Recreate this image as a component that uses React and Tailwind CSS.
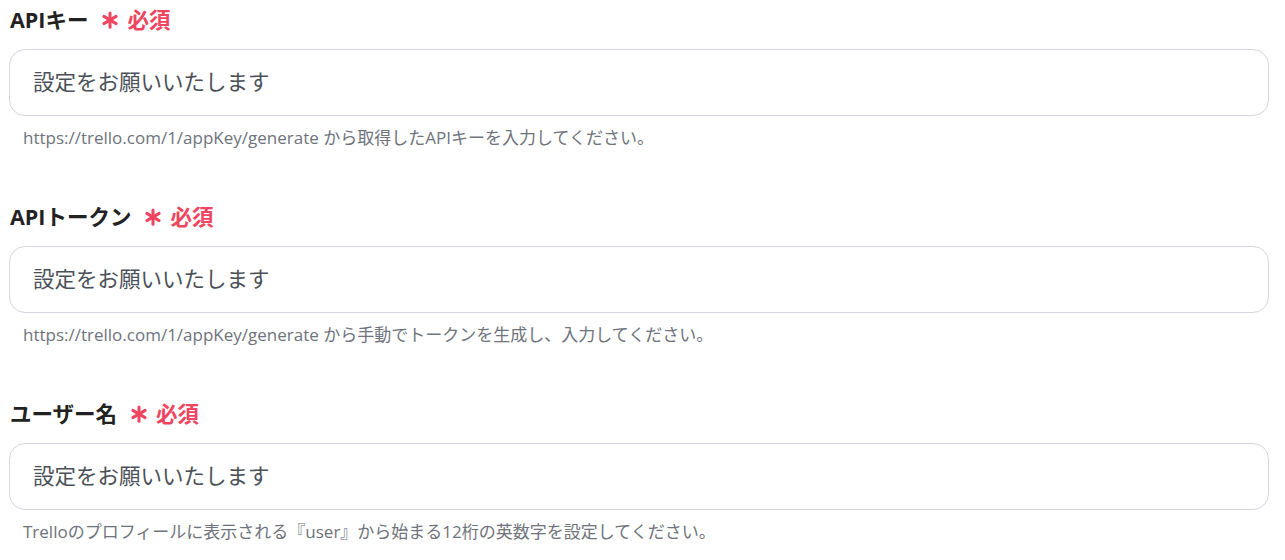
import React from 'react';

const fields = [
  {
    label: 'APIキー',
    help: 'https://trello.com/1/appKey/generate から取得したAPIキーを入力してください。',
  },
  {
    label: 'APIトークン',
    help: 'https://trello.com/1/appKey/generate から手動でトークンを生成し、入力してください。',
  },
  {
    label: 'ユーザー名',
    help: 'Trelloのプロフィールに表示される『user』から始まる12桁の英数字を設定してください。',
  },
];

function Asterisk() {
  return (
    <svg width="18" height="18" viewBox="0 0 24 24" className="text-[#f0455f]">
      <g stroke="currentColor" strokeWidth="4" strokeLinecap="round">
        <line x1="12" y1="2.5" x2="12" y2="21.5" />
        <line x1="3.8" y1="7.2" x2="20.2" y2="16.8" />
        <line x1="3.8" y1="16.8" x2="20.2" y2="7.2" />
      </g>
    </svg>
  );
}

export default function App() {
  return (
    <div className="bg-white w-[1285px] h-[560px] overflow-hidden px-[9px] pt-[6px] font-['Open_Sans','Noto_Sans_CJK_JP',sans-serif]">
      {fields.map((f, i) => (
        <div key={i} className="mb-[54px]">
          <div className="flex items-center h-[28px] pl-[1px]">
            <span className="text-[21.5px] font-bold text-[#222]">{f.label}</span>
            <span className="flex items-center ml-[13px] text-[21.5px] font-bold text-[#f0455f]">
              <Asterisk />
              <span className="ml-[8px]">必須</span>
            </span>
          </div>
          <div className="mt-[15px] h-[67px] w-[1260px] rounded-[16px] border border-[#d4d7dd] flex items-center pl-[23px]">
            <span className="text-[21.5px] text-[#4b5058]">設定をお願いいたします</span>
          </div>
          <p className="mt-[10px] pl-[14px] text-[17px] leading-[23px] text-[#6e737c]">{f.help}</p>
        </div>
      ))}
    </div>
  );
}
